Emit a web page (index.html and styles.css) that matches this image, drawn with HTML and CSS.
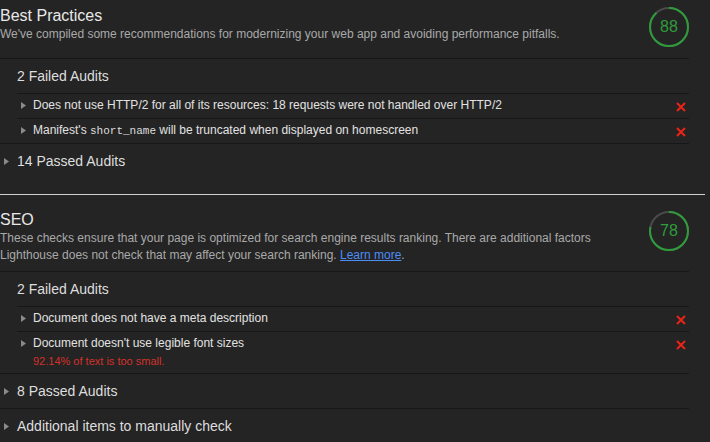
FILE: index.html
```html
<!DOCTYPE html>
<html lang="en">
<head>
<meta charset="utf-8">
<title>Lighthouse report</title>
<link rel="stylesheet" href="styles.css">
</head>
<body>
<div class="report">
  <section class="category">
    <header class="cat-header">
      <div class="cat-text">
        <h2 class="cat-title">Best Practices</h2>
        <p class="cat-desc">We've compiled some recommendations for modernizing your web app and avoiding performance pitfalls.</p>
      </div>
      <div class="gauge">
        <svg class="gauge-ring" viewBox="0 0 40 40" width="40" height="40">
          <circle cx="20" cy="20" r="19" fill="none" stroke="#4a4a4a" stroke-width="2"/>
          <circle cx="20" cy="20" r="19" fill="none" stroke="#2f9c3b" stroke-width="2" stroke-dasharray="105.06 119.38" transform="rotate(-90 20 20)"/>
        </svg>
        <span class="gauge-value">88</span>
      </div>
    </header>
    <div class="group">
      <div class="group-title">2 Failed Audits</div>
      <div class="audit">
        <div class="audit-main">
          <svg class="tri" viewBox="0 0 5 7" width="5" height="7"><polygon points="0,0 5,3.5 0,7" fill="#8a8a8a"/></svg>
          <div class="audit-text"><div class="audit-title">Does not use HTTP/2 for all of its resources: 18 requests were not handled over HTTP/2</div></div>
        </div>
        <svg class="fail" viewBox="0 0 10 10" width="10" height="10"><path d="M1 1 L9 9 M9 1 L1 9" stroke="#ec2317" stroke-width="2" fill="none"/></svg>
      </div>
      <div class="audit">
        <div class="audit-main">
          <svg class="tri" viewBox="0 0 5 7" width="5" height="7"><polygon points="0,0 5,3.5 0,7" fill="#8a8a8a"/></svg>
          <div class="audit-text"><div class="audit-title">Manifest's <code class="code">short_name</code> will be truncated when displayed on homescreen</div></div>
        </div>
        <svg class="fail" viewBox="0 0 10 10" width="10" height="10"><path d="M1 1 L9 9 M9 1 L1 9" stroke="#ec2317" stroke-width="2" fill="none"/></svg>
      </div>
    </div>
    <div class="group">
      <div class="group-title group-title--toggle">
        <svg class="tri tri--group" viewBox="0 0 5 7" width="5" height="7"><polygon points="0,0 5,3.5 0,7" fill="#8a8a8a"/></svg>14 Passed Audits
      </div>
    </div>
  </section>

  <hr class="sep">

  <section class="category category--seo">
    <header class="cat-header">
      <div class="cat-text">
        <h2 class="cat-title">SEO</h2>
        <p class="cat-desc">These checks ensure that your page is optimized for search engine results ranking. There are additional factors Lighthouse does not check that may affect your search ranking. <a class="link" href="#">Learn more</a>.</p>
      </div>
      <div class="gauge">
        <svg class="gauge-ring" viewBox="0 0 40 40" width="40" height="40">
          <circle cx="20" cy="20" r="19" fill="none" stroke="#4a4a4a" stroke-width="2"/>
          <circle cx="20" cy="20" r="19" fill="none" stroke="#2f9c3b" stroke-width="2" stroke-dasharray="93.12 119.38" transform="rotate(-90 20 20)"/>
        </svg>
        <span class="gauge-value">78</span>
      </div>
    </header>
    <div class="group">
      <div class="group-title">2 Failed Audits</div>
      <div class="audit">
        <div class="audit-main">
          <svg class="tri" viewBox="0 0 5 7" width="5" height="7"><polygon points="0,0 5,3.5 0,7" fill="#8a8a8a"/></svg>
          <div class="audit-text"><div class="audit-title">Document does not have a meta description</div></div>
        </div>
        <svg class="fail" viewBox="0 0 10 10" width="10" height="10"><path d="M1 1 L9 9 M9 1 L1 9" stroke="#ec2317" stroke-width="2" fill="none"/></svg>
      </div>
      <div class="audit">
        <div class="audit-main">
          <svg class="tri" viewBox="0 0 5 7" width="5" height="7"><polygon points="0,0 5,3.5 0,7" fill="#8a8a8a"/></svg>
          <div class="audit-text">
            <div class="audit-title">Document doesn't use legible font sizes</div>
            <div class="audit-sub">92.14% of text is too small.</div>
          </div>
        </div>
        <svg class="fail" viewBox="0 0 10 10" width="10" height="10"><path d="M1 1 L9 9 M9 1 L1 9" stroke="#ec2317" stroke-width="2" fill="none"/></svg>
      </div>
    </div>
    <div class="group">
      <div class="group-title group-title--toggle">
        <svg class="tri tri--group" viewBox="0 0 5 7" width="5" height="7"><polygon points="0,0 5,3.5 0,7" fill="#8a8a8a"/></svg>8 Passed Audits
      </div>
    </div>
    <div class="group">
      <div class="group-title group-title--toggle">
        <svg class="tri tri--group" viewBox="0 0 5 7" width="5" height="7"><polygon points="0,0 5,3.5 0,7" fill="#8a8a8a"/></svg>Additional items to manually check
      </div>
    </div>
  </section>
</div>
</body>
</html>
```

FILE: styles.css
```css
html, body {
  margin: 0;
  padding: 0;
  background: #242424;
}

body {
  font-family: "Liberation Sans", Arial, sans-serif;
  color: #e0e0e0;
  overflow: hidden;
}

.report {
  width: 705px;
}

.category {
  padding: 6px 16px 16px 0;
}

.category--seo {
  padding-top: 15px;
}

.cat-header {
  display: flex;
  justify-content: space-between;
  align-items: flex-start;
  padding-bottom: 11px;
}

.category--seo .cat-header {
  padding-bottom: 7px;
}

.cat-text {
  width: 630px;
}

.cat-title {
  margin: 0;
  font-size: 16px;
  line-height: 20px;
  font-weight: normal;
  color: #e8e8e8;
}

.cat-desc {
  margin: 0;
  font-size: 12px;
  line-height: 17px;
  color: #a9a9a9;
}

.link {
  color: #4c8df6;
  text-decoration: underline;
}

.gauge {
  flex: none;
  width: 40px;
  height: 40px;
  margin-top: 1px;
  display: grid;
  place-items: center;
}

.gauge-ring,
.gauge-value {
  grid-area: 1 / 1;
}

.gauge-ring {
  display: block;
}

.gauge-value {
  font-size: 16px;
  line-height: 16px;
  color: #2f9c3b;
}

.group {
  border-top: 1px solid #171717;
}

.group-title {
  display: flex;
  align-items: center;
  height: 34px;
  padding-left: 17px;
  font-size: 14px;
  line-height: 16px;
  color: #dedede;
}

.group-title--toggle {
  padding-left: 4px;
}

.tri {
  flex: none;
  display: block;
}

.tri--group {
  margin-right: 8px;
}

.audit {
  display: flex;
  justify-content: space-between;
  align-items: flex-start;
  margin-left: 17px;
  padding: 3px 0 5px;
  border-top: 1px solid #171717;
}

.audit-main {
  display: flex;
  align-items: flex-start;
}

.audit-main .tri {
  margin: 4.5px 7px 0 4px;
}

.audit-title {
  font-size: 12px;
  line-height: 16px;
  height: 16px;
  color: #e2e2e2;
}

.code {
  font-family: "Liberation Mono", "DejaVu Sans Mono", monospace;
  font-size: 11px;
  line-height: 1;
  color: #dcdcdc;
}

.audit-sub {
  margin-top: 3px;
  font-size: 11px;
  line-height: 14px;
  color: #d5312a;
}

.fail {
  flex: none;
  display: block;
  margin: 5px 3px 0 0;
}

.sep {
  margin: 0;
  border: 0;
  height: 1px;
  width: 705px;
  background: #cfcfcf;
}
```
